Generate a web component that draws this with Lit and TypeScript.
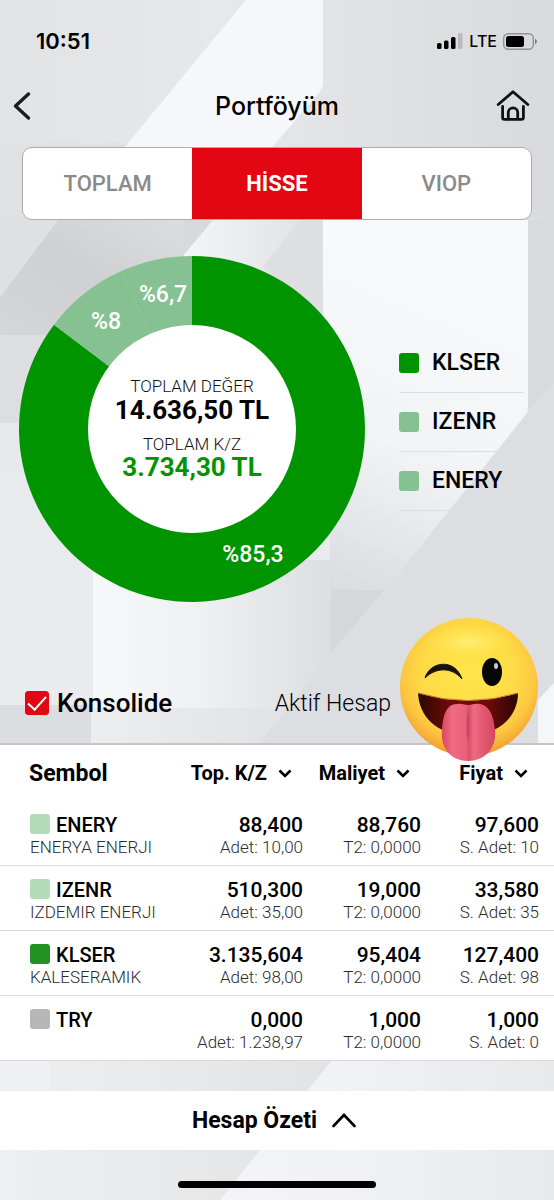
import { LitElement, html, css, svg } from "lit";
import { customElement, state } from "lit/decorators.js";

interface Holding {
  symbol: string;
  name: string;
  color: string;
  profit: string;
  qty: string;
  cost: string;
  t2: string;
  price: string;
  sellable: string;
}

const HOLDINGS: Holding[] = [
  { symbol: "ENERY", name: "ENERYA ENERJI", color: "#b5dab8", profit: "88,400", qty: "10,00", cost: "88,760", t2: "0,0000", price: "97,600", sellable: "10" },
  { symbol: "IZENR", name: "IZDEMIR ENERJI", color: "#b5dab8", profit: "510,300", qty: "35,00", cost: "19,000", t2: "0,0000", price: "33,580", sellable: "35" },
  { symbol: "KLSER", name: "KALESERAMIK", color: "#229222", profit: "3.135,604", qty: "98,00", cost: "95,404", t2: "0,0000", price: "127,400", sellable: "98" },
  { symbol: "TRY", name: "", color: "#b7b7b7", profit: "0,000", qty: "1.238,97", cost: "1,000", t2: "0,0000", price: "1,000", sellable: "0" },
];

const SLICES = [
  { symbol: "KLSER", share: 85.3, label: "%85,3", color: "#009400", x: 234, y: 306 },
  { symbol: "IZENR", share: 8, label: "%8", color: "#86c191", x: 87, y: 73 },
  { symbol: "ENERY", share: 6.7, label: "%6,7", color: "#86c193", x: 144, y: 46 },
];

const TABS = ["TOPLAM", "HİSSE", "VIOP"];

@customElement("page-backdrop")
export class PageBackdrop extends LitElement {
  static styles = css`
    :host { display: block; }
    .art { display: block; width: 100%; height: 100%; }
  `;

  render() {
    return html`<svg class="art" viewBox="0 0 554 1200" preserveAspectRatio="none" aria-hidden="true">
      <defs>
        <linearGradient id="base" x1="0" x2="1"><stop offset="0" stop-color="#e1e3e5"/><stop offset=".4" stop-color="#e7e8e9"/><stop offset=".6" stop-color="#e2e3e5"/><stop offset="1" stop-color="#d9dadd"/></linearGradient>
        <linearGradient id="mid" x1="0" y1="0" x2="0" y2="1"><stop offset="0" stop-color="#e4e5e7"/><stop offset="1" stop-color="#edeef1"/></linearGradient>
        <linearGradient id="shade" x1="0" y1="1" x2="1" y2="0"><stop offset="0" stop-color="#d5d6d9"/><stop offset=".5" stop-color="#cfd0d2"/><stop offset="1" stop-color="#dcdddf"/></linearGradient>
        <linearGradient id="block" x1="0" x2="1"><stop offset="0" stop-color="#f7f8fb"/><stop offset=".45" stop-color="#eff0f2"/><stop offset="1" stop-color="#dddee1"/></linearGradient>
        <linearGradient id="strip" x1="0" x2="1"><stop offset="0" stop-color="#ecedef"/><stop offset="1" stop-color="#dfe0e3"/></linearGradient>
        <linearGradient id="sliver" x1="0" x2="1"><stop offset="0" stop-color="#f4f5f6"/><stop offset="1" stop-color="#e2e3e5"/></linearGradient>
        <linearGradient id="panel" gradientUnits="userSpaceOnUse" x1="480" y1="300" x2="350" y2="610"><stop offset="0" stop-color="#f8f9fb"/><stop offset=".5" stop-color="#f2f3f5"/><stop offset="1" stop-color="#d9dade"/></linearGradient>
        <linearGradient id="foot" x1="0" x2="1"><stop offset="0" stop-color="#f6f7f8"/><stop offset=".6" stop-color="#f1f2f6"/><stop offset="1" stop-color="#e8e9eb"/></linearGradient>
        <linearGradient id="footDark" x1="0" x2="1"><stop offset="0" stop-color="#eeeff0"/><stop offset="1" stop-color="#e2e3e4"/></linearGradient>
      </defs>
      <rect width="554" height="1200" fill="url(#base)"/>
      <path d="M246 0H323V82Q323 88 319 93L209 220H64L128 143Z" fill="#f6f7fa"/>
      <path d="M0 143H128L64 220H0Z" fill="#e0e1e3"/>
      <rect y="220" width="554" height="525" fill="url(#mid)"/>
      <path d="M58 220H183V320L150 335H0V297Z" fill="url(#shade)"/>
      <path d="M0 220H58L0 297Z" fill="#dfe0e3"/>
      <path d="M0 335H200V423H0Z" fill="#dddee2"/>
      <path d="M183 220H213L183 256Z" fill="#d8d9db"/>
      <path d="M213 220H300L250 290H183V256Z" fill="url(#sliver)"/>
      <path d="M300 220H323V320L263 267Z" fill="#dedfe1"/>
      <path d="M0 583L45 530L93 520V745H0Z" fill="#eaebee"/>
      <path d="M93 560H332V745H93Z" fill="url(#block)"/>
      <path d="M0 705H91V745H0Z" fill="#dcdde1"/>
      <path d="M91 708H332V745H91Z" fill="url(#strip)"/>
      <path d="M323 220H528V405Q528 412 524 417L330 660V480L323 300Z" fill="url(#panel)"/>
      <path d="M332 590L386 590L332 655Z" fill="#d6d7db"/>
      <path d="M528 220H554V385L528 412Z" fill="#d9dadd"/>
      <path d="M554 384V745H258L332 652L378 597L400 572L524 417Z" fill="#dddee1"/>
      <path d="M538 700L554 683V745H538Z" fill="#f5f6f8"/>
      <rect y="1060" width="554" height="140" fill="url(#foot)"/>
      <path d="M0 1060H332L220 1200H0Z" fill="url(#footDark)"/>
      <path d="M0 1060H50V1090H0Z" fill="#eff0f3"/>
    </svg>`;
  }
}

@customElement("wink-face")
export class WinkFace extends LitElement {
  static styles = css`
    :host { display: block; }
    .face { display: block; width: 100%; height: auto; }
  `;

  render() {
    return html`<svg class="face" viewBox="0 0 140 144" role="img" aria-label="😜">
      <defs>
        <radialGradient id="skin" cx=".5" cy=".4" r=".62"><stop offset="0" stop-color="#ffe54a"/><stop offset=".55" stop-color="#fedb46"/><stop offset=".78" stop-color="#fcc741"/><stop offset=".9" stop-color="#f6ae38"/><stop offset="1" stop-color="#e8932c"/></radialGradient>
        <radialGradient id="shine" cx=".5" cy=".5" r=".5"><stop offset="0" stop-color="#fff27c" stop-opacity=".9"/><stop offset="1" stop-color="#ffe54b" stop-opacity="0"/></radialGradient>
        <linearGradient id="mouth" x1="0" x2="1"><stop offset="0" stop-color="#2a0804"/><stop offset=".3" stop-color="#6b0a08"/><stop offset=".7" stop-color="#6b0a08"/><stop offset="1" stop-color="#2a0804"/></linearGradient>
        <linearGradient id="tongue" x1="0" x2="1"><stop offset="0" stop-color="#d9485f"/><stop offset=".2" stop-color="#ef6b82"/><stop offset=".45" stop-color="#e8627a"/><stop offset=".51" stop-color="#d9506a"/><stop offset=".6" stop-color="#ee6a82"/><stop offset="1" stop-color="#d6455e"/></linearGradient>
      </defs>
      <circle cx="69" cy="69" r="69" fill="url(#skin)"/>
      <ellipse cx="69" cy="24" rx="44" ry="17" fill="url(#shine)"/>
      <path d="M25 60C30 43 55 40 62 61C52 49 36 49 25 60Z" fill="#17110d" stroke="#17110d" stroke-width="1" stroke-linejoin="round"/>
      <ellipse cx="92" cy="54" rx="10" ry="14" fill="#080707"/>
      <ellipse cx="96" cy="48" rx="2" ry="3" fill="#c9c9cf"/>
      <path d="M18 75Q68 90 118 75C118 97 101 117 68 117C35 117 19 97 18 75Z" fill="url(#mouth)"/>
      <path d="M18 75Q68 90 118 75" fill="none" stroke="#c98218" stroke-width="1"/>
      <path d="M42 112C43 98 46 86 57 86C62 85 65 87 68 87C71 87 74 85 80 86C91 88 94 101 95 112C97 131 84 143 68 143C52 143 40 131 42 112Z" fill="url(#tongue)"/>
      <path d="M68 90C66 104 66 116 68 123C70 116 70 104 68 90Z" fill="#cc4560"/>
    </svg>`;
  }
}

@customElement("share-donut")
export class ShareDonut extends LitElement {
  static styles = css`
    :host { display: block; }
    .chart { display: block; width: 100%; height: auto; font-family: Roboto, sans-serif; }
    .share { font-size: 23px; font-weight: 500; fill: #fff; text-anchor: middle; }
    .caption { font-size: 17px; font-weight: 300; fill: #111; text-anchor: middle; }
    .amount { font-size: 26px; font-weight: 700; fill: #000; text-anchor: middle; }
    .gain { fill: #009400; }
  `;

  private arc(from: number, to: number) {
    const at = (pct: number) => {
      const a = (pct / 100) * Math.PI * 2;
      return `${173 + 173 * Math.sin(a)} ${173 - 173 * Math.cos(a)}`;
    };
    return `M173 173L${at(from)}A173 173 0 ${to - from > 50 ? 1 : 0} 1 ${at(to)}Z`;
  }

  render() {
    let start = 0;
    const parts = SLICES.map((s) => {
      const from = start;
      start += s.share;
      return svg`<path d=${this.arc(from, start)} fill=${s.color}></path>`;
    });
    return html`<svg class="chart" viewBox="0 0 346 346">
      ${parts}
      <circle cx="173" cy="173" r="104" fill="#fff"/>
      ${SLICES.map((s) => svg`<text class="share" x=${s.x} y=${s.y}>${s.label}</text>`)}
      <text class="caption" x="173" y="136">TOPLAM DEĞER</text>
      <text class="amount" x="173" y="163">14.636,50 TL</text>
      <text class="caption" x="173" y="194">TOPLAM K/Z</text>
      <text class="amount gain" x="173" y="220">3.734,30 TL</text>
    </svg>`;
  }
}

@customElement("app-root")
export class AppRoot extends LitElement {
  @state() private tab = "HİSSE";
  @state() private consolidated = true;

  static styles = css`
    :host { display: block; font-family: Roboto, "Open Sans", sans-serif; color: #000; }
    * { box-sizing: border-box; }
    button { font: inherit; color: inherit; border: 0; padding: 0; margin: 0; background: none; cursor: pointer; }
    .page { position: relative; min-height: 100vh; display: flex; flex-direction: column; isolation: isolate; }
    .backdrop { position: absolute; inset: 0; z-index: -1; }
    .status { display: flex; justify-content: space-between; align-items: center; height: 82px; padding: 0 16px 0 36px; font-family: Inter, sans-serif; }
    .clock { font-size: 22px; font-weight: 600; }
    .signals { display: flex; align-items: center; gap: 6px; font-size: 16px; font-weight: 500; }
    .header { display: flex; justify-content: space-between; align-items: center; height: 48px; padding: 0 24px 0 12px; }
    .title { margin: 0; font-family: Inter, sans-serif; font-size: 25px; font-weight: 500; }
    .icon-button { display: flex; height: 34px; align-items: center; }
    .back { width: 46px; }
    .icon { display: block; flex: none; }
    .tabs { display: flex; height: 73px; margin: 17px 22px 0; border: 1px solid #adadad; border-radius: 10px; overflow: hidden; background: #fff; }
    .tab { flex: 1; font-size: 22px; font-weight: 500; color: #8a8a8a; }
    .tab.active { background: #e30613; color: #fff; font-weight: 700; }
    .overview { display: flex; align-items: center; justify-content: space-between; padding: 36px 30px 61px 19px; }
    .donut { flex: 0 1 346px; }
    .legend { list-style: none; width: 125px; margin: 0; padding: 0 0 14px; }
    .legend-item { display: flex; align-items: center; gap: 13px; height: 59px; border-bottom: 1px solid #dcdde0; font-size: 23px; font-weight: 500; }
    .swatch { flex: none; width: 20px; height: 20px; border-radius: 3px; }
    .account { position: relative; display: flex; align-items: center; justify-content: space-between; height: 80px; padding: 0 163px 0 25px; }
    .consolidate { display: flex; align-items: center; gap: 8px; font-size: 26px; font-weight: 500; }
    .check { appearance: none; width: 24px; height: 24px; margin: 0; border-radius: 3px; background: #fff; border: 1px solid #e30613; display: grid; place-items: center; }
    .check:checked { background: #e30613; }
    .check:checked::after { content: ""; width: 16px; height: 8px; margin: 0 0 4px; border: solid #fff; border-width: 0 0 2px 2px; transform: rotate(-48deg); }
    .active-account { font-size: 23px; font-weight: 300; }
    .sticker { position: absolute; right: 14px; top: -45px; width: 140px; z-index: 1; }
    .holdings { width: 100%; table-layout: fixed; border-collapse: separate; border-spacing: 0; background: #fff; border-top: 2px solid #c6c6c8; }
    .col-num { width: 118px; }
    .col-last { width: 133px; }
    th { height: 56px; padding: 0 11px 0 0; text-align: right; font-size: 20px; font-weight: 700; }
    th:last-child { padding-right: 26px; }
    .symbol-head { padding-left: 29px; text-align: left; font-size: 23px; }
    .sort { display: inline-flex; align-items: center; gap: 11px; white-space: nowrap; }
    td { height: 65px; padding: 13px 0 7px; border-bottom: 1px solid #d9d9da; text-align: right; vertical-align: top; white-space: nowrap; }
    td:last-child { padding-right: 15px; }
    .symbol-cell { padding-left: 30px; text-align: left; }
    .main { display: flex; align-items: center; justify-content: flex-end; gap: 6px; height: 22px; font-size: 21px; line-height: 22px; font-weight: 500; }
    .symbol-cell .main { justify-content: flex-start; font-size: 20px; }
    .symbol-cell .swatch { align-self: flex-start; }
    .sub { height: 22px; font-size: 17px; line-height: 22px; font-weight: 300; color: #2c2c2e; }
    .summary { display: flex; align-items: center; justify-content: center; gap: 15px; height: 59px; margin-top: 30px; padding-right: 6px; background: #fff; font-size: 23px; font-weight: 700; }
    .home-area { flex: 1; display: flex; align-items: flex-end; justify-content: center; min-height: 50px; padding-bottom: 12px; }
    .home-bar { width: 198px; height: 7px; border-radius: 4px; background: #000; }
  `;

  private sortHead(label: string) {
    return html`<th scope="col"><button class="sort">${label}
      <svg class="icon" width="14" height="9" viewBox="0 0 14 9"><path d="M1.500 1.500L7 7L12.500 1.500" fill="none" stroke="#000" stroke-width="2.600"/></svg>
    </button></th>`;
  }

  render() {
    return html`<div class="page">
      <page-backdrop class="backdrop"></page-backdrop>
      <div class="status">
        <span class="clock">10:51</span>
        <span class="signals">
          <svg class="icon" width="26" height="16" viewBox="0 0 26 16"><rect x="0" y="10" width="4.500" height="6" rx="1.500"/><rect x="7" y="7.500" width="4.500" height="8.500" rx="1.500"/><rect x="14" y="4" width="4.500" height="12" rx="1.500"/><rect x="21" y="0" width="4.500" height="16" rx="1.500" fill="#b9babc"/></svg>
          LTE
          <svg class="icon" width="35" height="17" viewBox="0 0 35 17"><rect x=".7" y=".7" width="29.600" height="15.600" rx="4.500" fill="none" stroke="#929396" stroke-width="1.400"/><rect x="3" y="3" width="18" height="11" rx="2.500"/><path d="M32 6C34.500 6.600 34.500 10.400 32 11Z" fill="#77787a"/></svg>
        </span>
      </div>
      <header class="header">
        <button class="icon-button back" aria-label="Geri"><svg class="icon" width="20" height="30" viewBox="0 0 20 30"><path d="M16.500 3L3.500 15L16.500 27" fill="none" stroke="#1c1c1e" stroke-width="3.400" stroke-linecap="round" stroke-linejoin="round"/></svg></button>
        <h1 class="title">Portföyüm</h1>
        <button class="icon-button" aria-label="Ana sayfa"><svg class="icon" width="34" height="34" viewBox="0 0 34 34" fill="none" stroke="#111" stroke-width="2.800" stroke-linecap="round" stroke-linejoin="round"><path d="M2.200 15.500L17 2.700L31.800 15.500"/><path d="M6.600 17.500V28.500Q6.600 30.300 8.400 30.300H25.600Q27.400 30.300 27.400 28.500V17.500"/><path d="M12.300 30V23.500A4.700 4.700 0 0 1 21.700 23.500V30"/></svg></button>
      </header>
      <nav class="tabs">
        ${TABS.map((t) => html`<button class="tab ${t === this.tab ? "active" : ""}" @click=${() => (this.tab = t)}>${t}</button>`)}
      </nav>
      <section class="overview">
        <share-donut class="donut"></share-donut>
        <ul class="legend">
          ${SLICES.map((s) => html`<li class="legend-item"><span class="swatch" style="background:${s.color}"></span>${s.symbol}</li>`)}
        </ul>
      </section>
      <section class="account">
        <label class="consolidate"><input class="check" type="checkbox" .checked=${this.consolidated} @change=${() => (this.consolidated = !this.consolidated)} />Konsolide</label>
        <span class="active-account">Aktif Hesap</span>
        <wink-face class="sticker"></wink-face>
      </section>
      <table class="holdings">
        <colgroup><col /><col class="col-num" /><col class="col-num" /><col class="col-last" /></colgroup>
        <thead><tr><th class="symbol-head" scope="col">Sembol</th>${this.sortHead("Top. K/Z")}${this.sortHead("Maliyet")}${this.sortHead("Fiyat")}</tr></thead>
        <tbody>
          ${HOLDINGS.map((h) => html`<tr>
            <td class="symbol-cell"><div class="main"><span class="swatch" style="background:${h.color}"></span>${h.symbol}</div><div class="sub">${h.name}</div></td>
            <td><div class="main">${h.profit}</div><div class="sub">Adet: ${h.qty}</div></td>
            <td><div class="main">${h.cost}</div><div class="sub">T2: ${h.t2}</div></td>
            <td><div class="main">${h.price}</div><div class="sub">S. Adet: ${h.sellable}</div></td>
          </tr>`)}
        </tbody>
      </table>
      <button class="summary">Hesap Özeti
        <svg class="icon" width="24" height="15" viewBox="0 0 24 15"><path d="M1.500 13L12 2L22.500 13" fill="none" stroke="#000" stroke-width="2.600" stroke-linecap="round"/></svg>
      </button>
      <div class="home-area"><div class="home-bar"></div></div>
    </div>`;
  }
}
